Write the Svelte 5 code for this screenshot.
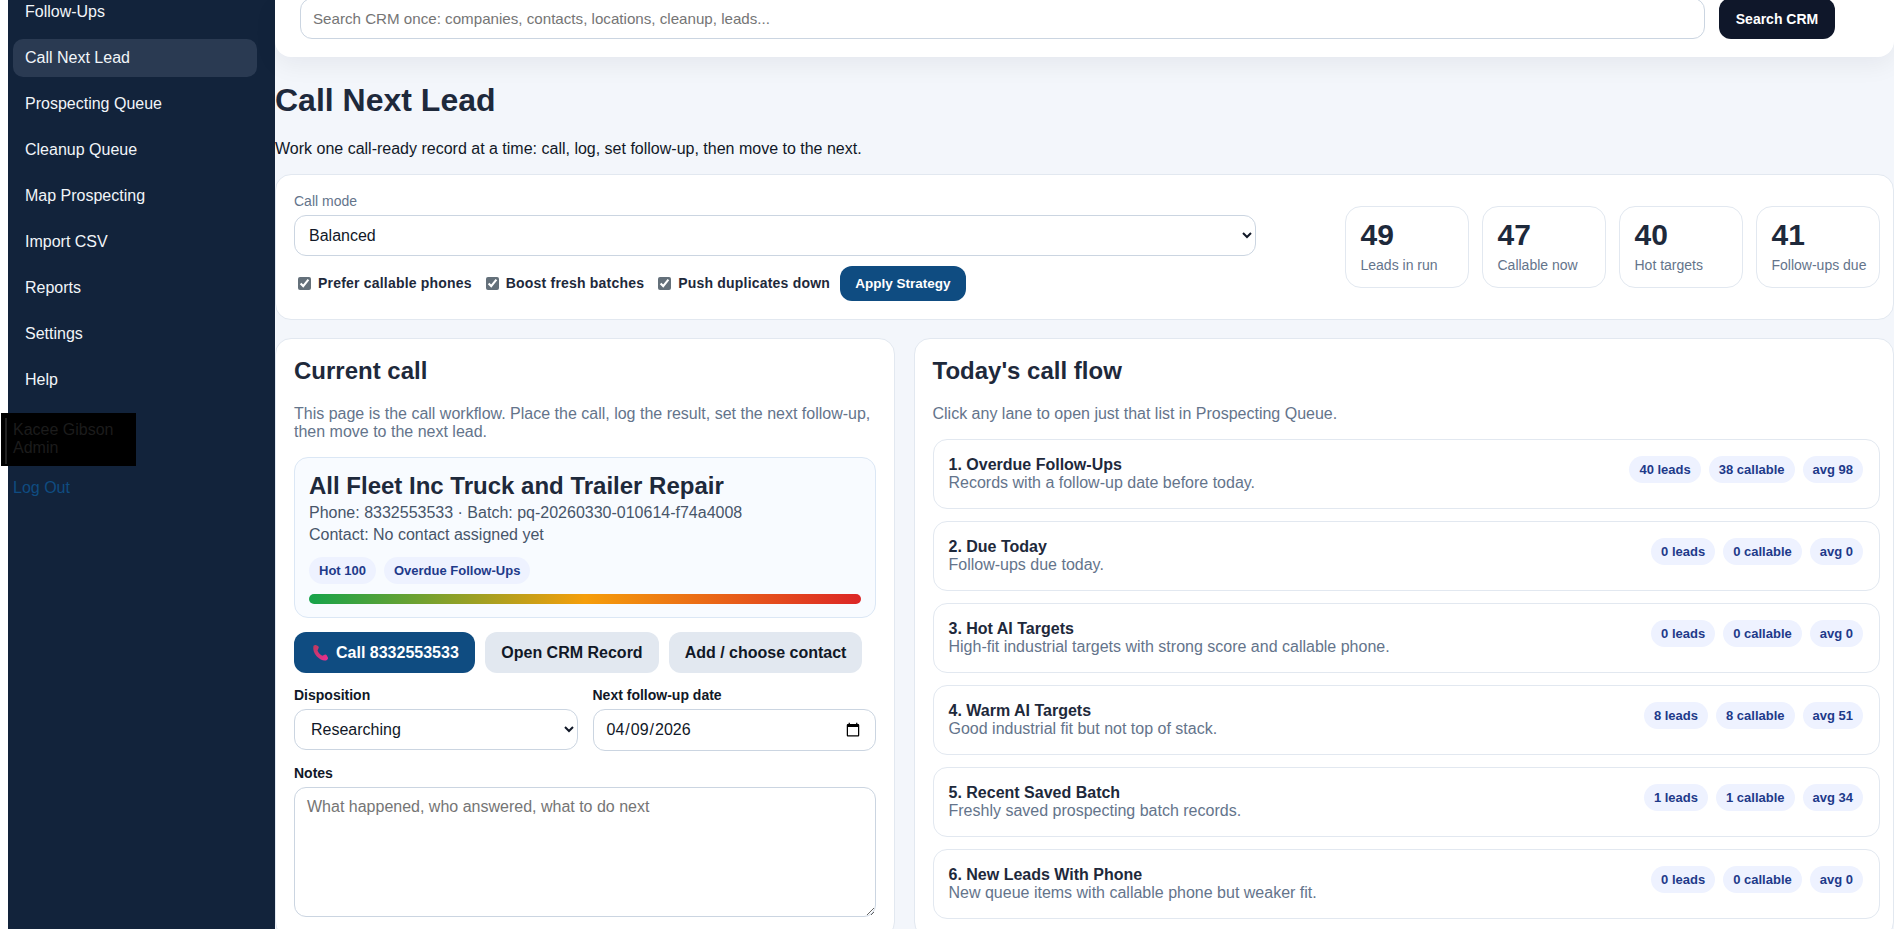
<script>
	const navItems = ['Follow-Ups', 'Call Next Lead', 'Prospecting Queue', 'Cleanup Queue', 'Map Prospecting', 'Import CSV', 'Reports', 'Settings', 'Help'];
	const stats = [
		{ value: 49, label: 'Leads in run' },
		{ value: 47, label: 'Callable now' },
		{ value: 40, label: 'Hot targets' },
		{ value: 41, label: 'Follow-ups due' }
	];
	const checks = ['Prefer callable phones', 'Boost fresh batches', 'Push duplicates down'];
	const lanes = [
		{ title: '1. Overdue Follow-Ups', text: 'Records with a follow-up date before today.', leads: 40, callable: 38, avg: 98 },
		{ title: '2. Due Today', text: 'Follow-ups due today.', leads: 0, callable: 0, avg: 0 },
		{ title: '3. Hot AI Targets', text: 'High-fit industrial targets with strong score and callable phone.', leads: 0, callable: 0, avg: 0 },
		{ title: '4. Warm AI Targets', text: 'Good industrial fit but not top of stack.', leads: 8, callable: 8, avg: 51 },
		{ title: '5. Recent Saved Batch', text: 'Freshly saved prospecting batch records.', leads: 1, callable: 1, avg: 34 },
		{ title: '6. New Leads With Phone', text: 'New queue items with callable phone but weaker fit.', leads: 0, callable: 0, avg: 0 }
	];
</script>

<div class="shell">
	<aside class="sidebar">
		<nav class="nav">
			{#each navItems as item}
				<a href="#top" class="nav-link" class:active={item === 'Call Next Lead'}>{item}</a>
			{/each}
		</nav>
		<div class="user">
			<div class="user-inner">Kacee Gibson<br />Admin</div>
		</div>
		<a href="#top" class="logout">Log Out</a>
	</aside>

	<main class="main">
		<div class="search-card">
			<input class="field search-input" type="text" placeholder="Search CRM once: companies, contacts, locations, cleanup, leads..." />
			<button class="btn-search">Search CRM</button>
		</div>

		<h1>Call Next Lead</h1>
		<p class="intro">Work one call-ready record at a time: call, log, set follow-up, then move to the next.</p>

		<section class="panel strategy">
			<div class="strategy-form">
				<label class="mode-label" for="mode">Call mode</label>
				<select class="field mode-select" id="mode">
					<option>Balanced</option>
				</select>
				<div class="checks">
					{#each checks as check}
						<label class="check"><input type="checkbox" checked />{check}</label>
					{/each}
					<button class="btn-apply">Apply Strategy</button>
				</div>
			</div>
			<div class="stats">
				{#each stats as stat}
					<div class="stat">
						<strong>{stat.value}</strong>
						<span>{stat.label}</span>
					</div>
				{/each}
			</div>
		</section>

		<div class="columns">
			<section class="panel">
				<h2>Current call</h2>
				<p class="muted">This page is the call workflow. Place the call, log the result, set the next follow-up, then move to the next lead.</p>

				<div class="lead">
					<div class="lead-name">All Fleet Inc Truck and Trailer Repair</div>
					<div class="lead-line">Phone: 8332553533 · Batch: pq-20260330-010614-f74a4008</div>
					<div class="lead-line">Contact: No contact assigned yet</div>
					<div class="pills lead-pills">
						<span class="pill">Hot 100</span>
						<span class="pill">Overdue Follow-Ups</span>
					</div>
					<div class="heat"></div>
				</div>

				<div class="actions">
					<button class="btn btn-call">
						<svg width="20" height="20" viewBox="0 0 24 24" aria-hidden="true">
							<defs>
								<linearGradient id="handset" x1="0" y1="0" x2="1" y2="1">
									<stop offset="0" stop-color="#b93a5c" />
									<stop offset="1" stop-color="#ec2f93" />
								</linearGradient>
							</defs>
							<path fill="url(#handset)" d="M4 4.5C4 3 5.5 2 7 2.5L9.5 3.5C10.5 4 10.8 5 10.3 6L9 9C9.8 11.5 12 14 14.8 15.2L17.5 14C18.5 13.5 19.5 13.8 20 14.8L21.5 17.5C22 18.8 21 20.2 19.8 20.6C17 21.6 12 20.5 8 16C4.5 12 3.5 7.5 4 4.5Z" />
						</svg>
						Call 8332553533
					</button>
					<button class="btn btn-soft">Open CRM Record</button>
					<button class="btn btn-soft">Add / choose contact</button>
				</div>

				<div class="form-grid">
					<div>
						<label class="form-label" for="disposition">Disposition</label>
						<select class="field" id="disposition">
							<option>Researching</option>
						</select>
					</div>
					<div>
						<label class="form-label" for="followup">Next follow-up date</label>
						<input class="field date" id="followup" type="date" value="2026-04-09" />
					</div>
				</div>

				<label class="form-label notes-label" for="notes">Notes</label>
				<textarea class="field notes" id="notes" placeholder="What happened, who answered, what to do next"></textarea>
			</section>

			<section class="panel flow">
				<h2>Today's call flow</h2>
				<p class="muted">Click any lane to open just that list in Prospecting Queue.</p>
				<div class="lanes">
					{#each lanes as lane}
						<div class="lane">
							<div>
								<div class="lane-title">{lane.title}</div>
								<div class="lane-text">{lane.text}</div>
							</div>
							<div class="pills">
								<span class="pill">{lane.leads} leads</span>
								<span class="pill">{lane.callable} callable</span>
								<span class="pill">avg {lane.avg}</span>
							</div>
						</div>
					{/each}
				</div>
			</section>
		</div>
	</main>
</div>

<style>
	:global(body) {
		background: #fff;
		overflow: hidden;
	}
	.shell {
		display: flex;
		height: 929px;
		padding-left: 8px;
		overflow: hidden;
		font-family: 'Liberation Sans', Arial, sans-serif;
		font-size: 16px;
		color: #111827;
	}
	.sidebar {
		flex: 0 0 267px;
		background: #12233b;
	}
	.nav {
		display: flex;
		flex-direction: column;
		gap: 8px;
		margin-top: -7px;
		padding: 0 18px 0 5px;
	}
	.nav-link {
		padding: 10px 12px;
		height: 18px;
		line-height: 18px;
		border-radius: 10px;
		color: #f1f5f9;
		text-decoration: none;
	}
	.nav-link.active {
		background: #2a3a52;
	}
	.user {
		width: 131px;
		margin: 14px 0 13px -7px;
		padding: 5px 0 2px 4px;
		background: #000;
		color: #1c1c1c;
	}
	.user-inner {
		border-left: 2px solid #222;
		padding: 3px 0 7px 6px;
		line-height: 18px;
	}
	.logout {
		margin-left: 5px;
		color: #0f4c81;
		text-decoration: none;
	}
	.main {
		flex: 1;
		min-width: 0;
		background: #f3f6fb;
	}
	.search-card {
		display: flex;
		align-items: flex-end;
		gap: 14px;
		height: 39px;
		padding: 0 59px 18px 25px;
		background: #fff;
		border-radius: 0 0 16px 16px;
		box-shadow: 0 8px 24px rgba(15, 23, 42, 0.06);
	}
	.field {
		box-sizing: border-box;
		width: 100%;
		height: 41px;
		padding: 0 12px;
		border: 1px solid #cbd5e1;
		border-radius: 12px;
		background: #fff;
		font: inherit;
		color: #111827;
	}
	.search-input {
		flex: 1;
		font-size: 15.15px;
	}
	.btn-search {
		flex: 0 0 116px;
		height: 41px;
		border: 0;
		border-radius: 12px;
		background: #0f172a;
		color: #fff;
		font: bold 14px 'Liberation Sans', Arial, sans-serif;
	}
	h1 {
		margin: 25px 0 21px;
		font-size: 32px;
		line-height: 37px;
		color: #1e293b;
	}
	.intro {
		margin: 0 0 16px;
		line-height: 18px;
	}
	.panel {
		box-sizing: border-box;
		padding: 18px;
		background: #fff;
		border: 1px solid #e2e8f0;
		border-radius: 16px;
	}
	.strategy {
		display: flex;
		align-items: center;
		gap: 89px;
		height: 146px;
		padding-right: 13px;
	}
	.strategy-form {
		flex: 1;
		min-width: 0;
	}
	.mode-label {
		display: block;
		margin-bottom: 6px;
		font-size: 14px;
		line-height: 16px;
		color: #64748b;
	}
	.mode-select {
		padding-left: 10px;
	}
	.checks {
		display: flex;
		align-items: center;
		gap: 10px;
		margin-top: 10px;
	}
	.check {
		display: flex;
		align-items: center;
		padding-bottom: 1px;
		font-size: 14px;
		font-weight: bold;
		letter-spacing: 0.2px;
		color: #1e293b;
		white-space: nowrap;
	}
	.check input {
		width: 13px;
		height: 13px;
		margin: 0 7px 0 4px;
		accent-color: #64707a;
	}
	.btn-apply {
		width: 126px;
		height: 35px;
		border: 0;
		border-radius: 12px;
		background: #0f4c81;
		color: #fff;
		font: bold 13.5px 'Liberation Sans', Arial, sans-serif;
	}
	.stats {
		display: grid;
		grid-template-columns: repeat(4, 124.5px);
		gap: 12.5px;
	}
	.stat {
		box-sizing: border-box;
		height: 82px;
		padding: 11px 14px 11px 15px;
		border: 1px solid #e2e8f0;
		border-radius: 16px;
	}
	.stat strong {
		display: block;
		font-size: 30px;
		line-height: 34px;
		color: #1e293b;
	}
	.stat span {
		display: block;
		margin-top: 5px;
		font-size: 14px;
		line-height: 16px;
		color: #64748b;
		white-space: nowrap;
	}
	.columns {
		display: grid;
		grid-template-columns: 620px 1fr;
		gap: 18.5px;
		margin-top: 18px;
	}
	.flow {
		padding-right: 13px;
	}
	h2 {
		margin: 0 0 20.5px;
		font-size: 24px;
		line-height: 27px;
		color: #1e293b;
	}
	.muted {
		margin: 0 0 15.5px;
		line-height: 18.5px;
		color: #64748b;
	}
	.lead {
		box-sizing: border-box;
		height: 161px;
		padding: 14px;
		background: #f8fbff;
		border: 1px solid #dbe7f5;
		border-radius: 14px;
	}
	.lead-name {
		font-size: 24px;
		font-weight: bold;
		line-height: 28px;
		color: #1e293b;
	}
	.lead-line {
		margin-top: 4px;
		line-height: 18px;
		color: #475569;
	}
	.pills {
		display: flex;
		gap: 8px;
		flex-shrink: 0;
	}
	.lead-pills {
		margin-top: 13px;
	}
	.pill {
		height: 27px;
		padding: 0 10px;
		line-height: 27px;
		border-radius: 14px;
		background: #eef2ff;
		font-size: 13px;
		font-weight: bold;
		color: #1e3a8a;
		white-space: nowrap;
	}
	.heat {
		height: 10px;
		margin-top: 10px;
		border-radius: 5px;
		background: linear-gradient(90deg, #16a34a, #f59e0b, #dc2626);
	}
	.actions {
		display: flex;
		gap: 10px;
		margin-top: 14px;
	}
	.btn {
		height: 41px;
		padding: 0 16.5px;
		border: 0;
		border-radius: 12px;
		font: bold 16px 'Liberation Sans', Arial, sans-serif;
	}
	.btn:first-child {
		padding: 0 16px;
	}
	.btn:last-child {
		padding: 0 15.5px;
	}
	.btn-call {
		display: flex;
		align-items: center;
		gap: 6px;
		background: #0f4c81;
		color: #fff;
	}
	.btn-soft {
		background: #e2e8f0;
		color: #111827;
	}
	.form-grid {
		display: grid;
		grid-template-columns: 1fr 1fr;
		gap: 15px;
		margin-top: 14px;
	}
	.form-label {
		display: block;
		margin-bottom: 6px;
		font-size: 14px;
		font-weight: bold;
		line-height: 16px;
		color: #111827;
	}
	.date {
		height: 42px;
	}
	.notes-label {
		margin-top: 14px;
	}
	.notes {
		display: block;
		height: 130px;
		padding: 10px 12px;
	}
	.notes::placeholder,
	.search-input::placeholder {
		color: #757575;
	}
	.lanes {
		display: flex;
		flex-direction: column;
		gap: 12px;
	}
	.lane {
		box-sizing: border-box;
		display: flex;
		align-items: flex-start;
		justify-content: space-between;
		height: 70px;
		padding: 16px 16px 0 15px;
		border: 1px solid #e2e8f0;
		border-radius: 14px;
	}
	.lane-title {
		font-weight: bold;
		line-height: 18px;
		color: #1e293b;
	}
	.lane-text {
		line-height: 18px;
		color: #64748b;
	}
</style>
